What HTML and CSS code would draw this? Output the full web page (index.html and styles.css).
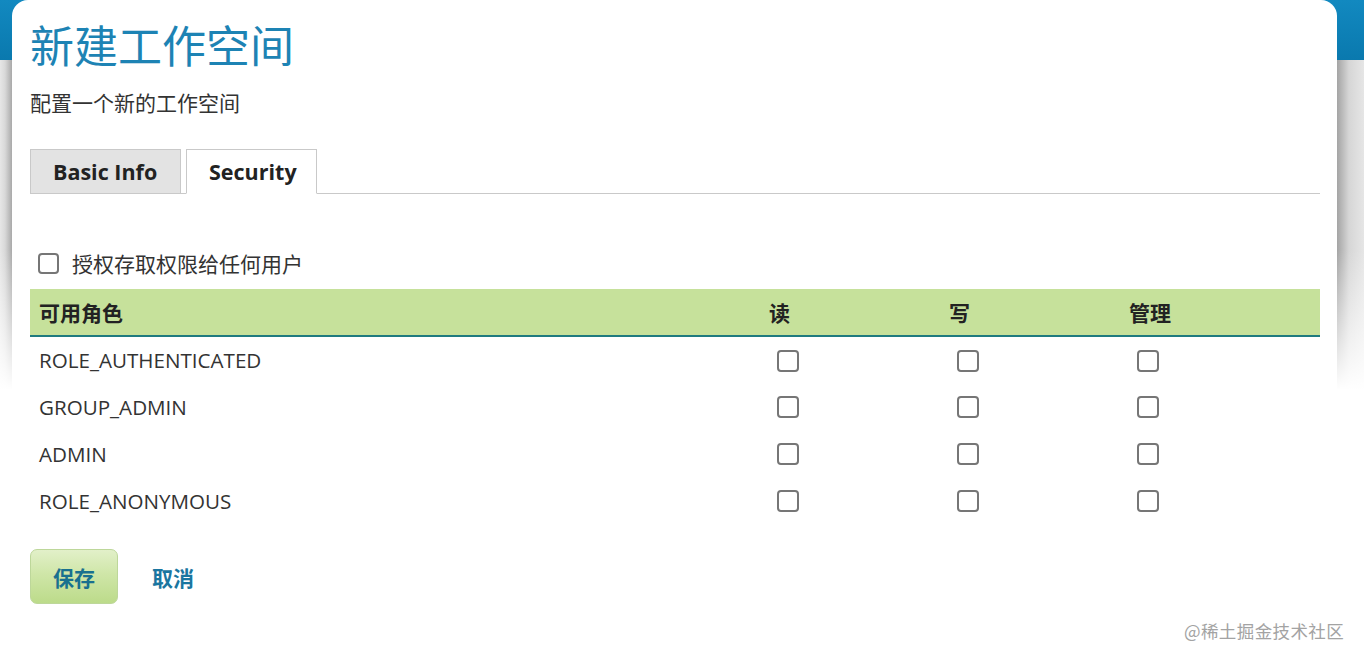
FILE: index.html
```html
<!DOCTYPE html>
<html lang="zh-CN">
<head>
<meta charset="utf-8">
<title>新建工作空间</title>
<link rel="stylesheet" href="styles.css">
</head>
<body>
<div class="modal">
  <h1 class="title">新建工作空间</h1>
  <p class="subtitle">配置一个新的工作空间</p>
  <div class="tabs">
    <div class="tab tab-basic">Basic Info</div>
    <div class="tab tab-active">Security</div>
  </div>
  <label class="grant">
    <span class="cb"></span>
    <span class="grant-text">授权存取权限给任何用户</span>
  </label>
  <table class="roles">
    <thead>
      <tr>
        <th class="c-name">可用角色</th>
        <th class="c-perm">读</th>
        <th class="c-perm">写</th>
        <th class="c-perm c-last">管理</th>
      </tr>
    </thead>
    <tbody>
      <tr><td class="c-name">ROLE_AUTHENTICATED</td><td class="c-box"><span class="cb cb-lg"></span></td><td class="c-box"><span class="cb cb-lg"></span></td><td class="c-box"><span class="cb cb-lg"></span></td></tr>
      <tr><td class="c-name">GROUP_ADMIN</td><td class="c-box"><span class="cb cb-lg"></span></td><td class="c-box"><span class="cb cb-lg"></span></td><td class="c-box"><span class="cb cb-lg"></span></td></tr>
      <tr><td class="c-name">ADMIN</td><td class="c-box"><span class="cb cb-lg"></span></td><td class="c-box"><span class="cb cb-lg"></span></td><td class="c-box"><span class="cb cb-lg"></span></td></tr>
      <tr><td class="c-name">ROLE_ANONYMOUS</td><td class="c-box"><span class="cb cb-lg"></span></td><td class="c-box"><span class="cb cb-lg"></span></td><td class="c-box"><span class="cb cb-lg"></span></td></tr>
    </tbody>
  </table>
  <div class="actions">
    <button class="btn-save">保存</button>
    <a class="btn-cancel">取消</a>
  </div>
</div>
<div class="watermark">@稀土掘金技术社区</div>
</body>
</html>
```
FILE: styles.css
```css
html, body {
  margin: 0;
  padding: 0;
  height: 100%;
}
body {
  font-family: "Open Sans", "Noto Sans CJK SC", sans-serif;
  color: #333;
  overflow: hidden;
  background:
    linear-gradient(to bottom, rgba(255,255,255,0) 250px, #fff 390px),
    linear-gradient(to bottom, #1289c0 0, #0a79ae 60px, rgba(0,0,0,0) 60px),
    linear-gradient(to right, #e6e6e6 0, #d8d8d8 5px, #a9a9a9 12px, #a9a9a9 1337px, #a4a4a4 1337px, #d6d6d6 1349px, #e6e6e6 100%);
}
.modal {
  margin-left: 12px;
  width: 1290px;
  min-height: 661px;
  background: #fff;
  border-radius: 16px 16px 0 0;
  padding: 14px 17px 0 18px;
}
.title {
  margin: 0;
  font-family: "Noto Sans CJK SC", sans-serif;
  font-size: 44px;
  font-weight: 400;
  line-height: 60px;
  color: #1d83b4;
}
.subtitle {
  margin: 14px 0 0;
  font-family: "Noto Sans CJK SC", sans-serif;
  font-size: 21px;
  line-height: 28px;
  color: #333;
}
.tabs {
  display: flex;
  margin-top: 33px;
  border-bottom: 1px solid #c9c9c9;
  height: 44px;
}
.tab {
  box-sizing: border-box;
  height: 45px;
  padding: 0 22px;
  font-size: 21.5px;
  font-weight: 700;
  line-height: 43px;
  color: #222;
  border: 1px solid #c9c9c9;
}
.tab-basic {
  width: 151px;
  background: #e3e3e3;
}
.tab-active {
  width: 131px;
  margin-left: 5px;
  background: #fff;
  border-bottom-color: #fff;
}
.grant {
  display: flex;
  align-items: center;
  margin-top: 54px;
  padding-left: 8px;
  height: 30px;
}
.cb {
  display: inline-block;
  box-sizing: border-box;
  width: 21px;
  height: 21px;
  border: 2px solid #767676;
  border-radius: 4px;
  background: #fff;
}
.cb-lg {
  width: 22px;
  height: 22px;
}
.grant-text {
  margin-left: 13px;
  font-family: "Noto Sans CJK SC", sans-serif;
  font-size: 21px;
}
.roles {
  margin-top: 11px;
  width: 1290px;
  border-collapse: collapse;
  table-layout: fixed;
}
.roles thead tr {
  background: #c6e19b;
  height: 47px;
  border-bottom: 2px solid #1f7b7f;
}
.roles th {
  font-family: "Noto Sans CJK SC", sans-serif;
  font-size: 21px;
  font-weight: 700;
  color: #222;
  text-align: left;
  padding: 0 0 0 9px;
}
.roles th.c-name { width: 720px; }
.roles th.c-perm { width: 170px; padding-left: 10px; }
.roles th.c-last { width: auto; }
.roles tbody tr { height: 47px; }
.roles td {
  padding: 0;
  vertical-align: middle;
}
.roles td.c-name {
  padding-left: 9px;
  font-size: 20.6px;
  color: #333;
}
.roles td.c-box {
  padding-left: 18px;
}
.roles td.c-box .cb { vertical-align: middle; }
.actions {
  display: flex;
  align-items: center;
  margin-top: 25px;
}
.btn-save {
  width: 88px;
  height: 55px;
  border: 1px solid #bdd79a;
  border-radius: 7px;
  background: linear-gradient(to bottom, #e2f0c9 0, #cfe6a8 45%, #bcdb8a 100%);
  font-family: "Noto Sans CJK SC", sans-serif;
  font-size: 21px;
  font-weight: 700;
  color: #19708f;
  padding: 0;
}
.btn-cancel {
  margin-left: 34px;
  font-family: "Noto Sans CJK SC", sans-serif;
  font-size: 21px;
  font-weight: 700;
  color: #1a76a0;
}
.watermark {
  position: absolute;
  left: 1184px;
  top: 618px;
  font-family: "Noto Sans CJK SC", sans-serif;
  font-size: 17.5px;
  color: #a3a3a3;
  letter-spacing: 0.4px;
}
```
